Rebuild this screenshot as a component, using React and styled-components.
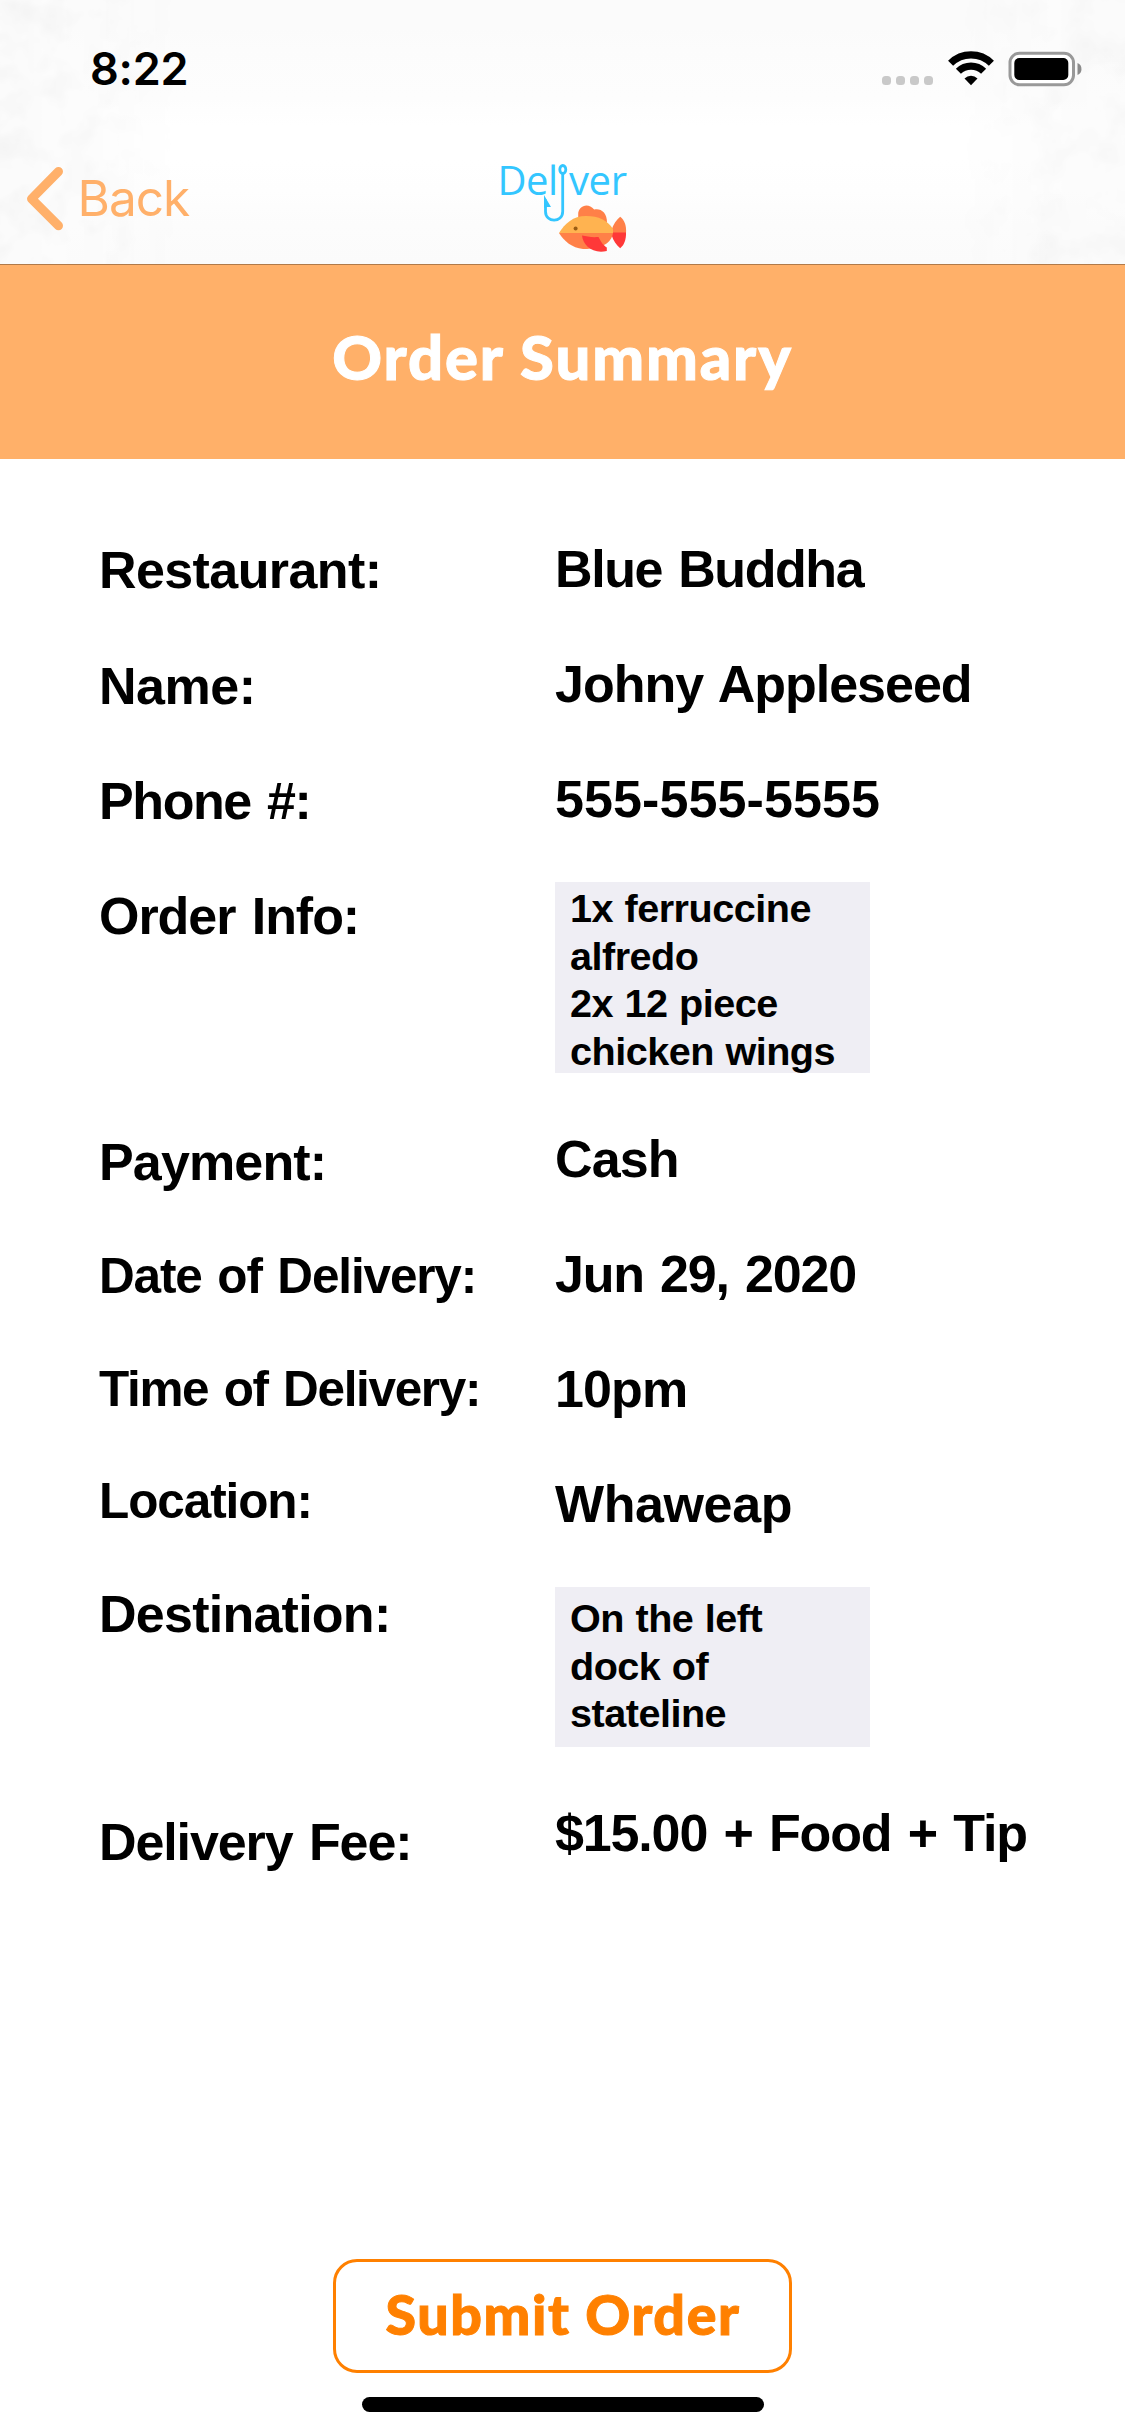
import React from "react";
import styled, { createGlobalStyle } from "styled-components";

const GlobalStyle = createGlobalStyle`
  * { box-sizing: border-box; }
  body { margin: 0; background: #fff; }
`;

const Screen = styled.div`
  display: flex;
  flex-direction: column;
  width: 1125px;
  height: 2436px;
  overflow: hidden;
  background: #fff;
  color: #000;
  font-family: "Liberation Sans", Arial, sans-serif;
`;

const Header = styled.header`
  position: relative;
  flex: none;
  height: 265px;
  border-bottom: 1px solid #b07a4a;
  background: linear-gradient(#fbfbfb 0, #fbfbfb 28px, #fcfcfc 50px, #fdfdfd 98px, #fff 125px, #fff 160px, #fefefe 190px, #fcfcfc 225px, #fbfbfb 264px);
`;

const Texture = styled.svg`
  position: absolute;
  inset: 0;
  width: 1125px;
  height: 264px;
`;

const StatusBar = styled.div`
  position: relative;
  display: flex;
  justify-content: space-between;
  height: 132px;
  padding: 0 42px 0 90px;
`;

const Clock = styled.span`
  padding-top: 42px;
  font: 600 45px/54px Inter, sans-serif;
  letter-spacing: -0.2px;
`;

const StatusIcons = styled.div`
  display: flex;
  align-items: flex-start;
  padding-top: 51px;
`;

const SignalDots = styled.div`
  display: flex;
  gap: 5px;
  margin: 25px 15px 0 0;
`;

const Dot = styled.i`
  width: 9px;
  height: 9px;
  border-radius: 3.5px;
  background: #c9c9c9;
`;

const NavBar = styled.nav`
  position: relative;
  display: grid;
  grid-template-columns: 1fr 130px 1fr;
  height: 132px;
`;

const BackButton = styled.button`
  display: flex;
  align-items: flex-start;
  gap: 12.5px;
  padding: 33px 0 0 25px;
  border: 0;
  background: none;
  color: #ffb06a;
  font: 400 49.5px/62px Inter, sans-serif;
  letter-spacing: -1px;
`;

const BackLabel = styled.span`
  padding-top: 2px;
`;

const LogoSlot = styled.div`
  display: flex;
  padding-top: 18px;
`;

const Banner = styled.h1`
  flex: none;
  height: 194px;
  margin: 0;
  padding-top: 55px;
  background: #ffb069;
  color: #fff;
  text-align: center;
  font: 900 61.5px/72px Lato, sans-serif;
  letter-spacing: 1.9px;
  -webkit-text-stroke: 1px #fff;
`;

const Summary = styled.dl`
  flex: none;
  height: 1800px;
  margin: 0;
  padding: 80px 0 0 99px;
`;

const Row = styled.div`
  display: grid;
  grid-template-columns: 456px 1fr;
  align-items: start;
  height: ${(p) => p.$height}px;
`;

const Label = styled.dt`
  padding-top: ${(p) => p.$drop || 0}px;
  white-space: nowrap;
  font-weight: 700;
  font-size: ${(p) => (p.$small ? 49.5 : 52)}px;
  line-height: 60px;
  letter-spacing: ${(p) => p.$track}px;
  word-spacing: 3px;
`;

const Value = styled.dd`
  margin: 0;
  padding-top: ${(p) => p.$drop || 0}px;
  white-space: nowrap;
  font-weight: 700;
  font-size: 52px;
  line-height: 60px;
  letter-spacing: ${(p) => p.$track}px;
  word-spacing: 3px;
`;

const Note = styled.dd`
  width: 315px;
  height: ${(p) => p.$height}px;
  margin: ${(p) => p.$drop || 0}px 0 0;
  padding: ${(p) => p.$inset}px 0 0 15px;
  background: #efeef4;
  white-space: pre-line;
  font-weight: 700;
  font-size: 39.6px;
  line-height: 47.5px;
  letter-spacing: -0.5px;
  word-spacing: 1px;
`;

const Footer = styled.footer`
  display: flex;
  flex-direction: column;
  align-items: center;
  gap: 24px;
`;

const SubmitButton = styled.button`
  width: 459px;
  height: 114px;
  padding: 0 0 4px 1px;
  border: 3px solid #ff8000;
  border-radius: 24px;
  background: #fff;
  color: #ff8000;
  font: 900 55.5px/64px Lato, sans-serif;
  letter-spacing: 1.6px;
  -webkit-text-stroke: 1px #ff8000;
`;

const HomeIndicator = styled.div`
  width: 402px;
  height: 15px;
  border-radius: 8px;
  background: #000;
`;

const WifiIcon = () => (
  <svg width="46" height="35" viewBox="0 0 46 35">
    <g fill="none" stroke="#000" strokeWidth="7.2">
      <path d="M2.6 12.2a29 29 0 0 1 40.8 0" />
      <path d="M10.4 20.3a18 18 0 0 1 25.2 0" />
    </g>
    <path d="M16.5 27.4a9.6 9.6 0 0 1 13 0L23 34.2z" />
  </svg>
);

const Battery = styled.svg`
  margin-left: 14px;
`;

const BatteryIcon = () => (
  <Battery width="75" height="36" viewBox="0 0 75 36">
    <rect x="2" y="2.2" width="63.5" height="31.6" rx="9.5" fill="#fff" stroke="#999" strokeWidth="3" />
    <rect x="6.3" y="7" width="54" height="22" rx="5" />
    <path d="M69.5 12c5.3 1.7 5.3 10.3 0 12z" fill="#8b8b8b" />
  </Battery>
);

const ChevronIcon = () => (
  <svg width="40" height="68" viewBox="0 0 40 68">
    <path d="M33.5 6.5L6.5 33.8l27 27" fill="none" stroke="#ffb06a" strokeWidth="9" strokeLinecap="round" strokeLinejoin="round" />
  </svg>
);

const Logo = () => (
  <svg width="130" height="110" viewBox="498 150 130 110">
    <g fill="#33c6ff" fontFamily="'Open Sans', sans-serif" fontSize="40">
      <text x="497.5" y="194.7" letterSpacing="-0.5">Del</text>
      <text x="569" y="194.7" letterSpacing="-0.4">ver</text>
    </g>
    <g fill="none" stroke="#33c6ff" strokeWidth="2.8">
      <ellipse cx="562.8" cy="169.5" rx="3" ry="4" />
      <path d="M562.7 174v37.5c0 11.500-17.200 11.500-17.200 0v-12" />
    </g>
    <path d="M544 195v13l3-1h4z" fill="#33c6ff" />
    <path d="M578.2 217v-3c0-7 9-12.500 16-4.500 6.500-1.500 13 3 12.800 13l-14 4z" fill="#ff8048" />
    <path d="M611.5 230c2-6 5-10 8.700-13.200 4 3 6.500 8.500 5.800 16.500h-14z" fill="#ff8048" />
    <path d="M611.5 235c2 6 5 10 8.700 13.200 4-3 6-8.500 5.800-15.600h-14z" fill="#ff3838" />
    <path d="M559 233c6-9.500 14-17 27-17 13 0 21 4 27 13v4z" fill="#ffb350" />
    <path d="M559 233h54c-1 7-7 16-30 16-11-1-19-8-24-16z" fill="#ff8048" />
    <path d="M582 235.500c5 1 9 2 16.500 1.500 4 7.500 5 8 8.300 10.500v3.500c-14 3.500-24-6-24.800-15.500z" fill="#ff3838" />
    <circle cx="575.6" cy="228.5" r="2" fill="#9a5c14" />
  </svg>
);

const HeaderTexture = () => (
  <Texture viewBox="0 0 1125 264">
    <defs>
      <filter id="mottle" x="0" y="0" width="100%" height="100%">
        <feTurbulence type="fractalNoise" baseFrequency="0.03" numOctaves="3" seed="8" />
        <feColorMatrix values="0 0 0 0 0.2  0 0 0 0 0.2  0 0 0 0 0.2  0.14 0 0 0 -0.06" />
      </filter>
      <linearGradient id="sides">
        <stop offset="0" stopColor="#fff" />
        <stop offset="0.08" stopColor="#bbb" />
        <stop offset="0.16" stopColor="#000" />
        <stop offset="0.85" stopColor="#000" />
        <stop offset="0.93" stopColor="#999" />
        <stop offset="1" stopColor="#bbb" />
      </linearGradient>
      <mask id="edges"><rect width="1125" height="264" fill="url(#sides)" /></mask>
    </defs>
    <g mask="url(#edges)">
      <rect width="1125" height="264" fill="#fbfbfb" />
      <rect width="1125" height="264" filter="url(#mottle)" />
    </g>
  </Texture>
);

export default function App() {
  return (
    <Screen>
      <GlobalStyle />
      <Header>
        <HeaderTexture />
        <StatusBar>
          <Clock>8:22</Clock>
          <StatusIcons>
            <SignalDots>
              <Dot /><Dot /><Dot /><Dot />
            </SignalDots>
            <WifiIcon />
            <BatteryIcon />
          </StatusIcons>
        </StatusBar>
        <NavBar>
          <BackButton>
            <ChevronIcon />
            <BackLabel>Back</BackLabel>
          </BackButton>
          <LogoSlot><Logo /></LogoSlot>
        </NavBar>
      </Header>
      <Banner>Order Summary</Banner>
      <Summary>
        <Row $height={115}>
          <Label $track={-0.6} $drop={1}>Restaurant:</Label>
          <Value $track={-1.4}>Blue Buddha</Value>
        </Row>
        <Row $height={115}>
          <Label $track={-0.5} $drop={2}>Name:</Label>
          <Value $track={-1}>Johny Appleseed</Value>
        </Row>
        <Row $height={113}>
          <Label $track={-1.4} $drop={2}>Phone #:</Label>
          <Value $track={0.1}>555-555-5555</Value>
        </Row>
        <Row $height={247}>
          <Label $track={-1.05} $drop={4}>Order Info:</Label>
          <Note $height={191} $inset={3}>{"1x ferruccine\nalfredo\n2x 12 piece\nchicken wings"}</Note>
        </Row>
        <Row $height={115}>
          <Label $track={-0.85} $drop={3}>Payment:</Label>
          <Value $track={-0.9}>Cash</Value>
        </Row>
        <Row $height={113}>
          <Label $small $track={-1.15} $drop={2}>Date of Delivery:</Label>
          <Value $track={-1.2}>Jun 29, 2020</Value>
        </Row>
        <Row $height={112}>
          <Label $small $track={-1.35} $drop={2}>Time of Delivery:</Label>
          <Value $track={-0.9} $drop={2}>10pm</Value>
        </Row>
        <Row $height={115}>
          <Label $small $track={-1.1} $drop={2}>Location:</Label>
          <Value $track={-0.4} $drop={5}>Whaweap</Value>
        </Row>
        <Row $height={219}>
          <Label $track={-0.75}>Destination:</Label>
          <Note $height={160} $drop={3} $inset={8}>{"On the left\ndock of\nstateline"}</Note>
        </Row>
        <Row $height={60}>
          <Label $track={-1.1} $drop={9}>Delivery Fee:</Label>
          <Value $track={-1.15}>$15.00 + Food + Tip</Value>
        </Row>
      </Summary>
      <Footer>
        <SubmitButton>Submit Order</SubmitButton>
        <HomeIndicator />
      </Footer>
    </Screen>
  );
}
